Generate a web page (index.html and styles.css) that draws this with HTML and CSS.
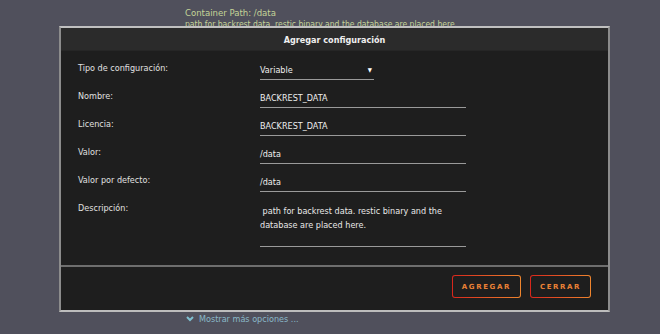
FILE: index.html
```html
<!DOCTYPE html>
<html lang="en">
<head>
    <meta charset="UTF-8">
    <meta name="viewport" content="width=device-width, initial-scale=1.0">
    <title>Agregar configuración</title>
    <link rel="stylesheet" href="styles.css">
</head>
<body>
    <div class="page">
        <div class="template-info">
            <p class="path-line path-title">Container Path: /data</p>
            <p class="path-line">path for backrest data. restic binary and the database are placed here.</p>
        </div>
        <div class="more-options">
            <svg class="chevron" width="8" height="6" viewBox="0 0 8 6">
                <path d="M1 1 L4 4 L7 1" fill="none" stroke="#7fbfd0" stroke-width="2"/>
            </svg>
            <span>Mostrar más opciones ...</span>
        </div>
    </div>

    <div class="modal">
        <div class="modal-header">Agregar configuración</div>
        <div class="modal-body">
            <div class="form-row">
                <label>Tipo de configuración:</label>
                <div class="select-box">
                    <span>Variable</span>
                    <span class="arrow">&#9660;</span>
                </div>
            </div>
            <div class="form-row">
                <label>Nombre:</label>
                <div class="text-input">BACKREST_DATA</div>
            </div>
            <div class="form-row">
                <label>Licencia:</label>
                <div class="text-input">BACKREST_DATA</div>
            </div>
            <div class="form-row">
                <label>Valor:</label>
                <div class="text-input">/data</div>
            </div>
            <div class="form-row">
                <label>Valor por defecto:</label>
                <div class="text-input">/data</div>
            </div>
            <div class="form-row">
                <label>Descripción:</label>
                <div class="text-area">&nbsp;path for backrest data. restic binary and the database are placed here.</div>
            </div>
        </div>
        <div class="modal-footer">
            <button class="btn">AGREGAR</button>
            <button class="btn">CERRAR</button>
        </div>
    </div>
</body>
</html>
```

FILE: styles.css
```css
body {
    margin: 0;
    padding: 0;
    background-color: #50505c;
    font-family: "DejaVu Sans Condensed", "Liberation Sans", sans-serif;
    font-size: 9px;
    color: #ddd;
}
.page {
    height: 334px;
    display: flex;
    flex-direction: column;
    justify-content: space-between;
    padding-left: 185px;
    box-sizing: border-box;
}
.template-info {
    padding-top: 7px;
}
.path-line {
    margin: 0;
    line-height: 11px;
    font-size: 8.5px;
    color: #c4d498;
}
.path-title {
    font-size: 9.5px;
    line-height: 12px;
}
.more-options {
    display: flex;
    align-items: center;
    gap: 5px;
    padding-bottom: 9px;
    line-height: 12px;
    color: #8ab8c8;
}
.chevron {
    margin-left: 1px;
}
.modal {
    position: absolute;
    top: 26px;
    left: 59px;
    width: 551px;
    height: 286px;
    box-sizing: border-box;
    background-color: #1e1e1e;
    border: 2px solid #8c8c8c;
    border-top-color: #c0c0c0;
    border-bottom-color: #bdbdbd;
    display: flex;
    flex-direction: column;
}
.modal-header {
    height: 22px;
    line-height: 24px;
    background-color: #2b2b2b;
    border-bottom: 1px solid #262626;
    text-align: center;
    font-weight: bold;
    color: #f0f0f0;
}
.modal-body {
    padding: 9px 0 18px 17px;
    display: flex;
    flex-direction: column;
    gap: 8px;
    border-bottom: 2px solid #6e6e6e;
}
.form-row {
    display: grid;
    grid-template-columns: 182px 206px;
}
.form-row label {
    line-height: 16px;
    color: #e0e0e0;
}
.text-input, .select-box {
    height: 20px;
    line-height: 20px;
    box-sizing: border-box;
    border-bottom: 1px solid #9a9a9a;
    color: #eee;
}
.select-box {
    width: 114px;
    display: flex;
    justify-content: space-between;
    padding-right: 2px;
}
.arrow {
    font-size: 6px;
    color: #fff;
}
.text-area {
    height: 47px;
    box-sizing: border-box;
    padding-top: 4px;
    line-height: 14px;
    border-bottom: 1px solid #9a9a9a;
    color: #e8e8e8;
}
.modal-footer {
    flex: 1;
    display: flex;
    justify-content: flex-end;
    align-items: flex-start;
    gap: 9px;
    padding: 8px 17px 0 0;
}
.btn {
    height: 23px;
    padding: 0 9px;
    border: 1.5px solid transparent;
    border-radius: 3px;
    background: linear-gradient(#1e1e1e, #1e1e1e) padding-box,
        linear-gradient(90deg, #d8261c, #f0862e) border-box;
    color: #ec8236;
    font-family: "DejaVu Sans", sans-serif;
    font-size: 7px;
    font-weight: bold;
    letter-spacing: 1.6px;
    cursor: pointer;
}
```
